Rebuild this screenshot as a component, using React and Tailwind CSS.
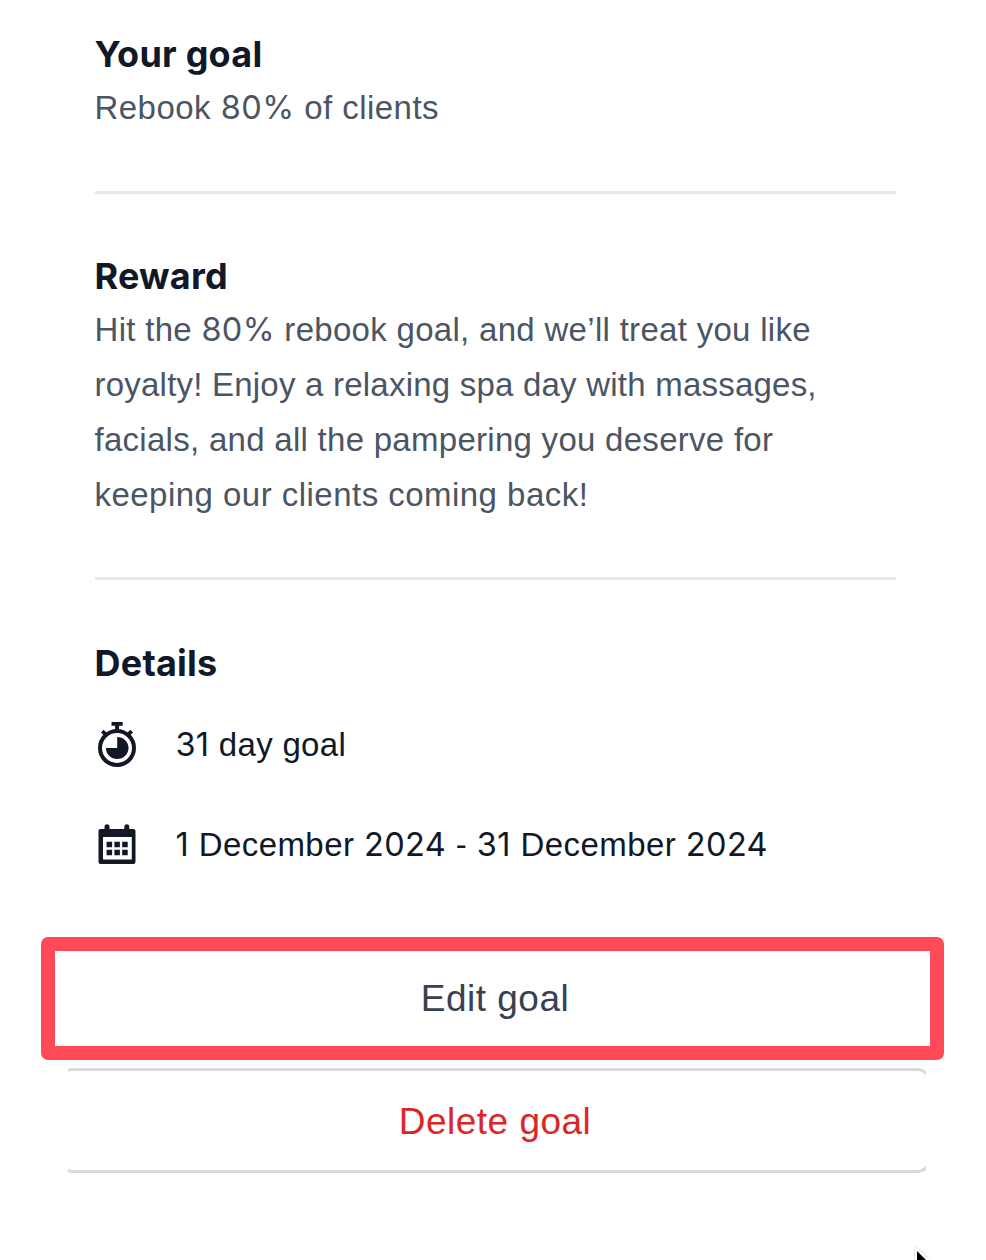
function Heading({ children }) {
  return (
    <h2 className="h-[52px] font-['Inter',sans-serif] text-[36px] leading-[52px] font-bold tracking-[0.22px] text-[#111827]">
      {children}
    </h2>
  );
}

function Divider() {
  return <div className="h-[3px] bg-[#e7e8eb]" />;
}

function Digits({ children }) {
  return <span className="font-['Inter',sans-serif] text-[32.5px] leading-none">{children}</span>;
}

function StopwatchIcon() {
  return (
    <svg className="h-[55px] w-11" viewBox="0 0 44 55" fill="none">
      <path d="M16.5 5h11.2v3.8h-3.6v4h-4v-4h-3.6z" fill="currentColor" />
      <path d="M7.3 14.2l3.6 3.4M36.7 14.2l-3.6 3.4" stroke="currentColor" strokeWidth="3.8" />
      <circle cx="22" cy="31" r="17" stroke="currentColor" strokeWidth="4" />
      <path d="M22.2 19.9V31H10.9A11.3 11.1 0 1 0 22.2 19.9z" fill="currentColor" />
    </svg>
  );
}

function CalendarIcon() {
  return (
    <svg className="h-[55px] w-11" viewBox="0 0 44 55" fill="currentColor">
      <path
        fillRule="evenodd"
        d="M5.5 12H9.5V9.8a2.5 2.5 0 0 1 5 0V12h14.8V9.8a2.5 2.5 0 0 1 5 0V12h4.2a2 2 0 0 1 2 2v31a2 2 0 0 1-2 2h-33a2 2 0 0 1-2-2V14a2 2 0 0 1 2-2zM8 20v22.6h28.8V20z"
      />
      <path d="M11.6 24.7h5.5v5.5h-5.5zM19.4 24.7h5.5v5.5h-5.5zM27.2 24.7h5.5v5.5h-5.5zM11.6 32.7h5.5v5.5h-5.5zM19.4 32.7h5.5v5.5h-5.5zM27.2 32.7h5.5v5.5h-5.5z" />
    </svg>
  );
}

export default function App() {
  return (
    <main className="relative h-[1260px] w-[986px] overflow-hidden bg-white pt-7 font-['Liberation_Sans',sans-serif] text-[33px] leading-[55px] whitespace-nowrap">
      <div className="ml-[94.5px] w-[801px]">
        <section className="pb-14">
          <Heading>Your goal</Heading>
          <p className="tracking-[0.46px] text-[#4b5563]">
            Rebook <Digits>80%</Digits> of clients
          </p>
        </section>
        <Divider />
        <section className="pt-14 pb-[55px]">
          <Heading>Reward</Heading>
          <p className="text-[#4b5563]">
            <span className="block tracking-[0.3px]">
              Hit the <Digits>80%</Digits> rebook goal, and we’ll treat you like
            </span>
            <span className="block tracking-[0.22px]">royalty! Enjoy a relaxing spa day with massages,</span>
            <span className="block tracking-[0.28px]">facials, and all the pampering you deserve for</span>
            <span className="block tracking-[0.47px]">keeping our clients coming back!</span>
          </p>
        </section>
        <Divider />
        <section className="pt-[57px] text-[#111827]">
          <Heading>Details</Heading>
          <ul className="mt-7 flex flex-col gap-[45px]">
            <li className="flex h-[55px] gap-[37px]">
              <StopwatchIcon />
              <span className="tracking-[0.3px]">
                <Digits>31</Digits> day goal
              </span>
            </li>
            <li className="flex h-[55px] gap-[37px]">
              <CalendarIcon />
              <span className="tracking-[0.42px]">
                <Digits>1</Digits> December <Digits>2024</Digits> - <Digits>31</Digits> December <Digits>2024</Digits>
              </span>
            </li>
          </ul>
        </section>
      </div>
      <div className="mt-[65px] ml-[41px] h-[123px] w-[903px] rounded-[7px] bg-[#ff4a57] p-[14px]">
        <button className="flex h-full w-full items-center justify-center bg-white pl-[5px] text-[37px] tracking-[0.5px] text-[#374151]">
          Edit goal
        </button>
      </div>
      <div className="mt-2 ml-[68px] w-[858px] overflow-hidden">
        <button className="-ml-2 flex h-[105px] w-[870px] items-center justify-center rounded-xl border-[3px] border-[#d8dade] pt-0.5 text-[37px] tracking-[0.5px] text-[#dc2626]">
          Delete goal
        </button>
      </div>
      <svg
        className="absolute top-[1244px] left-[912px] h-4 w-5 drop-shadow-[0_0_1px_rgba(0,0,0,0.2)]"
        viewBox="0 0 20 16"
      >
        <path d="M3 2v14h15z" fill="white" />
        <path d="M5 7v9h9z" fill="black" />
      </svg>
    </main>
  );
}
